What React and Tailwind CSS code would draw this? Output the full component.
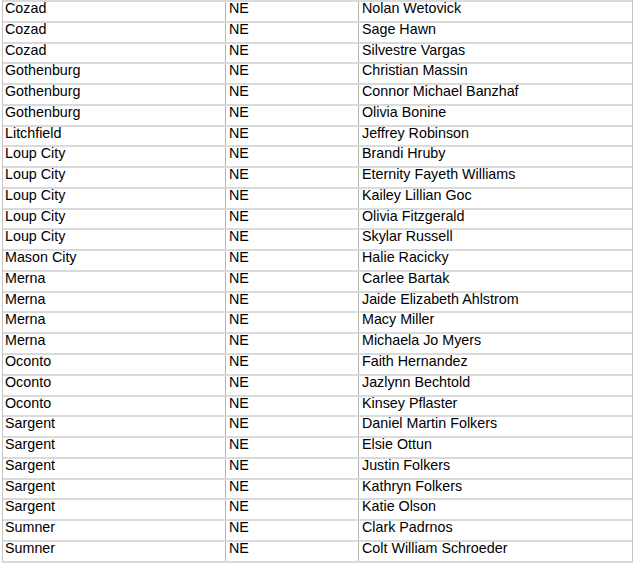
const rows = [
  ["Cozad", "NE", "Nolan Wetovick"],
  ["Cozad", "NE", "Sage Hawn"],
  ["Cozad", "NE", "Silvestre Vargas"],
  ["Gothenburg", "NE", "Christian Massin"],
  ["Gothenburg", "NE", "Connor Michael Banzhaf"],
  ["Gothenburg", "NE", "Olivia Bonine"],
  ["Litchfield", "NE", "Jeffrey Robinson"],
  ["Loup City", "NE", "Brandi Hruby"],
  ["Loup City", "NE", "Eternity Fayeth Williams"],
  ["Loup City", "NE", "Kailey Lillian Goc"],
  ["Loup City", "NE", "Olivia Fitzgerald"],
  ["Loup City", "NE", "Skylar Russell"],
  ["Mason City", "NE", "Halie Racicky"],
  ["Merna", "NE", "Carlee Bartak"],
  ["Merna", "NE", "Jaide Elizabeth Ahlstrom"],
  ["Merna", "NE", "Macy Miller"],
  ["Merna", "NE", "Michaela Jo Myers"],
  ["Oconto", "NE", "Faith Hernandez"],
  ["Oconto", "NE", "Jazlynn Bechtold"],
  ["Oconto", "NE", "Kinsey Pflaster"],
  ["Sargent", "NE", "Daniel Martin Folkers"],
  ["Sargent", "NE", "Elsie Ottun"],
  ["Sargent", "NE", "Justin Folkers"],
  ["Sargent", "NE", "Kathryn Folkers"],
  ["Sargent", "NE", "Katie Olson"],
  ["Sumner", "NE", "Clark Padrnos"],
  ["Sumner", "NE", "Colt William Schroeder"],
];

export default function App() {
  return (
    <div className="w-[638px] h-[565px] bg-white overflow-hidden" style={{ fontFamily: '"Liberation Sans", Arial, sans-serif' }}>
      <div className="ml-[2px] w-[631px] border-l border-r border-[#c4c4c4] border-b-2 border-b-[#dadada] text-[14.3px] leading-[12px] text-black">
        {rows.map((r, i) => (
          <div key={i} className="grid grid-cols-[223px_133px_273px] h-[20.78px] border-t-2 border-[#dadada]">
            <div className="pl-[2px] border-r border-[#b4b4b4] whitespace-nowrap">{r[0]}</div>
            <div className="pl-[3px] border-r border-[#b4b4b4] whitespace-nowrap">{r[1]}</div>
            <div className="pl-[3px] whitespace-nowrap">{r[2]}</div>
          </div>
        ))}
      </div>
    </div>
  );
}
